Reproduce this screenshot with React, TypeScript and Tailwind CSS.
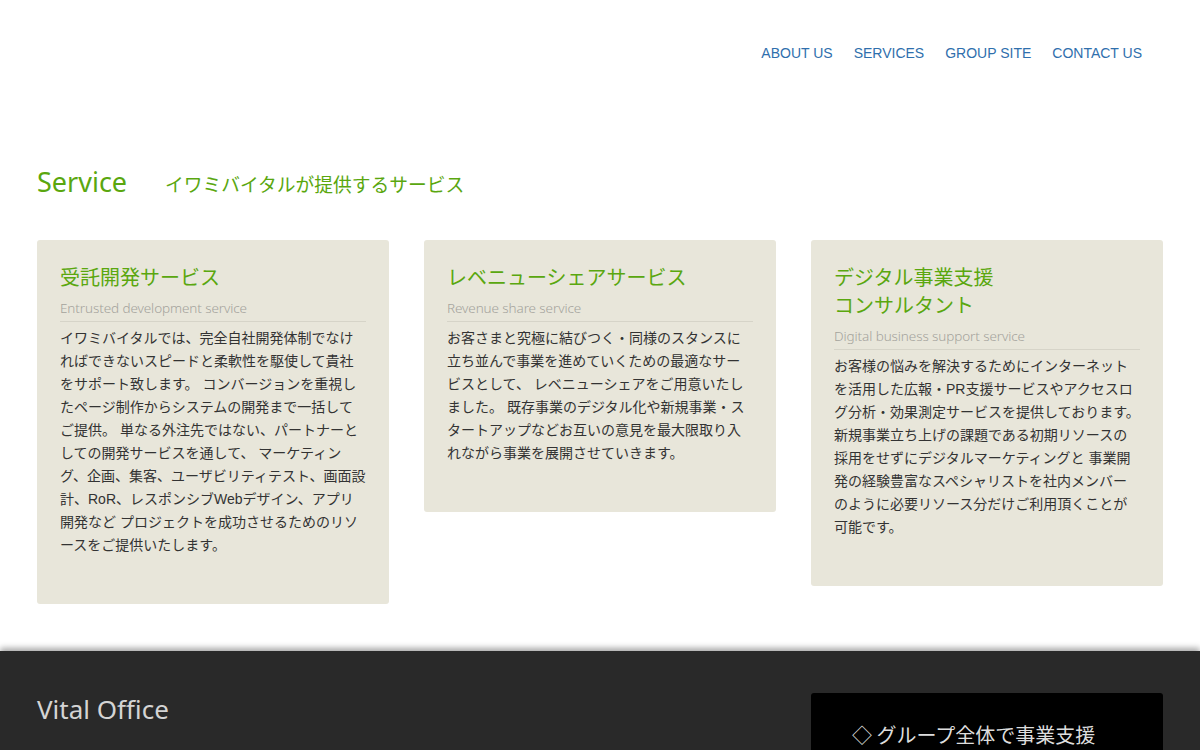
const NAV = ["ABOUT US", "SERVICES", "GROUP SITE", "CONTACT US"]

const CARDS = [
  {
    title: ["受託開発サービス"],
    sub: "Entrusted development service",
    body: "イワミバイタルでは、完全自社開発体制でなければできないスピードと柔軟性を駆使して貴社をサポート致します。 コンバージョンを重視したページ制作からシステムの開発まで一括してご提供。 単なる外注先ではない、パートナーとしての開発サービスを通して、 マーケティング、企画、集客、ユーザビリティテスト、画面設計、RoR、レスポンシブWebデザイン、アプリ開発など プロジェクトを成功させるためのリソースをご提供いたします。",
  },
  {
    title: ["レベニューシェアサービス"],
    sub: "Revenue share service",
    body: "お客さまと究極に結びつく・同様のスタンスに立ち並んで事業を進めていくための最適なサービスとして、 レベニューシェアをご用意いたしました。 既存事業のデジタル化や新規事業・スタートアップなどお互いの意見を最大限取り入れながら事業を展開させていきます。",
  },
  {
    title: ["デジタル事業支援", "コンサルタント"],
    sub: "Digital business support service",
    body: "お客様の悩みを解決するためにインターネットを活用した広報・PR支援サービスやアクセスログ分析・効果測定サービスを提供しております。 新規事業立ち上げの課題である初期リソースの採用をせずにデジタルマーケティングと 事業開発の経験豊富なスペシャリストを社内メンバーのように必要リソース分だけご利用頂くことが可能です。",
  },
]

function Card({ title, sub, body }: { title: string[]; sub: string; body: string }) {
  return (
    <div className="w-[352px] rounded-[3px] bg-[#e8e6da] px-[23px] pt-[23px] pb-[47px]">
      <h3 className="text-[20px] leading-[28px] text-[#5aa70f] font-['Noto_Sans_CJK_JP',sans-serif]">
        {title.map((t) => (
          <div key={t}>{t}</div>
        ))}
      </h3>
      <p className="mt-[8px] pb-[4px] border-b border-[#d6d4c8] text-[13.5px] leading-[18px] font-light text-[#a4a39c] font-['Noto_Sans','Noto_Sans_CJK_JP',sans-serif] tracking-[-0.1px]">
        {sub}
      </p>
      <p className="mt-[5px] text-[14px] leading-[23px] text-[#333333] font-['Liberation_Sans','Noto_Sans_CJK_JP',sans-serif]">
        {body}
      </p>
    </div>
  )
}

export default function App() {
  return (
    <div className="min-h-[750px] bg-white">
      <header className="flex justify-end px-[58px] pt-[44px]">
        <nav className="flex gap-[21px]">
          {NAV.map((n) => (
            <a
              key={n}
              className="text-[14px] leading-[18px] text-[#2f6fad] font-['Liberation_Sans',sans-serif]"
            >
              {n}
            </a>
          ))}
        </nav>
      </header>

      <section className="mx-[37px] mt-[102px]">
        <div className="flex items-baseline gap-[38px]">
          <h2 className="text-[27px] leading-[36px] text-[#5aa70f] font-['Noto_Sans',sans-serif]">
            Service
          </h2>
          <span className="text-[18.75px] text-[#5aa70f] font-['Noto_Sans_CJK_JP',sans-serif]">
            イワミバイタルが提供するサービス
          </span>
        </div>
        <div className="mt-[40px] flex items-start justify-between">
          {CARDS.map((c) => (
            <Card key={c.sub} {...c} />
          ))}
        </div>
      </section>

      <footer className="mt-[47px] h-[300px] bg-[#292929] shadow-[0_-3px_6px_rgba(0,0,0,0.35)] px-[37px] pt-[42px] flex justify-between items-start">
        <div className="mt-[-1px] text-[26px] leading-[34px] text-[#d4d4d4] font-['Noto_Sans',sans-serif]">
          Vital Office
        </div>
        <div className="w-[352px] h-[200px] bg-black rounded-[3px] px-[41px] pt-[28px]">
          <p className="text-[20px] leading-[28px] text-[#dddddd] font-['Noto_Sans_CJK_JP',sans-serif]">
            ◇ グループ全体で事業支援
          </p>
        </div>
      </footer>
    </div>
  )
}
